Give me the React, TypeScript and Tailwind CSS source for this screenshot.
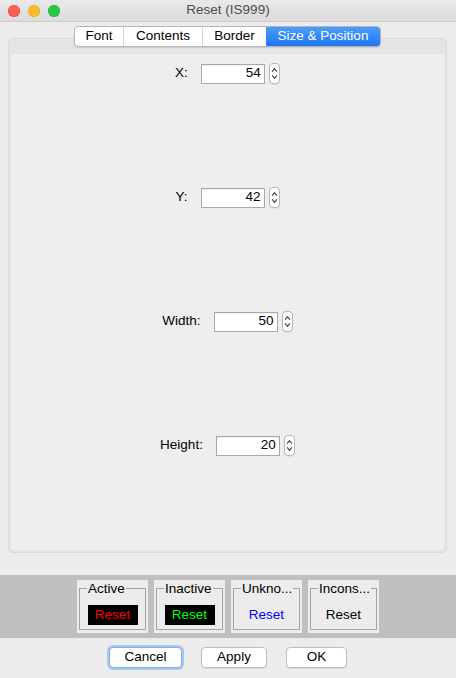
import React from 'react';

const font = { fontFamily: '"Liberation Sans", Arial, sans-serif' };

const tabs = [
  { label: 'Font', w: 'w-[48px]' },
  { label: 'Contents', w: 'w-[79px]' },
  { label: 'Border', w: 'w-[64px]' },
  { label: 'Size & Position', w: 'w-[114px]', active: true },
];

const fields = [
  { label: 'X:', value: '54' },
  { label: 'Y:', value: '42' },
  { label: 'Width:', value: '50' },
  { label: 'Height:', value: '20' },
];

function Spinner() {
  return (
    <div className="h-[21px] w-[11px] rounded-[4px] border border-[#b5b5b5] bg-white shadow-[0_1px_0_rgba(0,0,0,0.05)]">
      <svg width="9" height="19" viewBox="0 0 9 19" fill="none" stroke="#444" strokeWidth="1.1" strokeLinecap="round" strokeLinejoin="round">
        <path d="M2.3 7.3 L4.5 4.6 L6.7 7.3" />
        <path d="M2.3 11.7 L4.5 14.4 L6.7 11.7" />
      </svg>
    </div>
  );
}

function FieldRow({ label, value }: { label: string; value: string }) {
  return (
    <div className="flex items-start justify-center pt-[9px]">
      <div className="flex items-center">
        <span className="text-[13.5px] text-black">{label}</span>
        <div className="ml-[13px] flex h-[20px] w-[64px] items-center justify-end border border-[#a9a9a9] bg-white pr-[3px] text-[13.5px] text-black shadow-[inset_0_1px_0_rgba(0,0,0,0.06)]">
          {value}
        </div>
        <div className="ml-[4px]">
          <Spinner />
        </div>
      </div>
    </div>
  );
}

function ResetBox({ title, color, dark }: { title: string; color: string; dark?: boolean }) {
  return (
    <div className="h-[53px] w-[71px] bg-[#ececec] px-[2px] pb-[3px] pt-[1px]">
      <fieldset className="h-full border border-[#a3a3a3] pl-[7px] pr-[2px]">
        <legend className="px-[1px] text-[13.5px] leading-[15px] text-black">{title}</legend>
        <div className="mt-[9px] flex justify-center pr-[5px]">
          <div
            className={`flex h-[20px] w-[50px] items-center justify-center text-[13.5px] ${dark ? 'bg-black' : ''} ${color}`}
          >
            Reset
          </div>
        </div>
      </fieldset>
    </div>
  );
}

function Button({ label, w, focused }: { label: string; w: string; focused?: boolean }) {
  return (
    <button
      className={`flex h-[21px] ${w} items-center justify-center rounded-[4px] border bg-white text-[13.5px] text-black ${
        focused
          ? 'border-[#7cacf0] shadow-[0_0_0_2px_rgba(120,170,240,0.55)]'
          : 'border-[#bdbdbd] shadow-[0_1px_0_rgba(0,0,0,0.08)]'
      }`}
    >
      {label}
    </button>
  );
}

export default function App() {
  return (
    <div className="flex h-[678px] w-[456px] flex-col bg-[#ececec]" style={font}>
      {/* title bar */}
      <div className="relative flex h-[22px] items-center justify-center border-b border-[#cdcdcd] bg-linear-to-b from-[#e9e9e9] to-[#dcdcdc]">
        <div className="absolute left-[8px] top-[5px] flex gap-[8px]">
          <span className="h-[12px] w-[12px] rounded-full bg-[#fc5f57] shadow-[inset_0_0_0_0.5px_rgba(200,50,40,0.6)]" />
          <span className="h-[12px] w-[12px] rounded-full bg-[#fdbc2e] shadow-[inset_0_0_0_0.5px_rgba(200,140,20,0.6)]" />
          <span className="h-[12px] w-[12px] rounded-full bg-[#28c840] shadow-[inset_0_0_0_0.5px_rgba(20,150,40,0.6)]" />
        </div>
        <span className="text-[13.5px] text-[#4d4d4d]">Reset (IS999)</span>
      </div>

      {/* tabs + panel */}
      <div className="flex flex-col pl-[8px] pr-[9px] pt-[4px]">
        <div className="relative z-10 flex justify-center">
          <div className="flex h-[21px] overflow-hidden rounded-[4px] border border-[#b4b4b4] bg-white shadow-[0_1px_1px_rgba(0,0,0,0.1)]">
            {tabs.map((t, i) => (
              <div
                key={t.label}
                className={`flex ${t.w} items-center justify-center text-[13.5px] ${
                  t.active
                    ? 'bg-linear-to-b from-[#4c9dfa] to-[#1b74f4] text-white'
                    : 'text-black'
                } ${i > 0 && !t.active ? 'border-l border-[#d6d6d6]' : ''}`}
              >
                {t.label}
              </div>
            ))}
          </div>
        </div>
        <div className="-mt-[9px] flex h-[515px] flex-col rounded-[5px] border border-[#dadada] bg-[#e4e4e4] px-[2px] pb-[2px] pt-[15px]">
          <div className="grid flex-1 grid-rows-4 bg-[#eeeeee]">
            {fields.map((f) => (
              <FieldRow key={f.label} label={f.label} value={f.value} />
            ))}
          </div>
        </div>
      </div>

      {/* reset colours strip */}
      <div className="mt-[22px] flex h-[63px] justify-center gap-[6px] bg-[#bfbfbf] pt-[5px]">
        <ResetBox title="Active" color="text-[#ff0000]" dark />
        <ResetBox title="Inactive" color="text-[#00ff00]" dark />
        <ResetBox title="Unkno..." color="text-[#0000ff]" />
        <ResetBox title="Incons..." color="text-black" />
      </div>

      {/* buttons */}
      <div className="flex flex-1 justify-center gap-[19px] pt-[9px]">
        <Button label="Cancel" w="w-[73px]" focused />
        <Button label="Apply" w="w-[66px]" />
        <Button label="OK" w="w-[61px]" />
      </div>
    </div>
  );
}
